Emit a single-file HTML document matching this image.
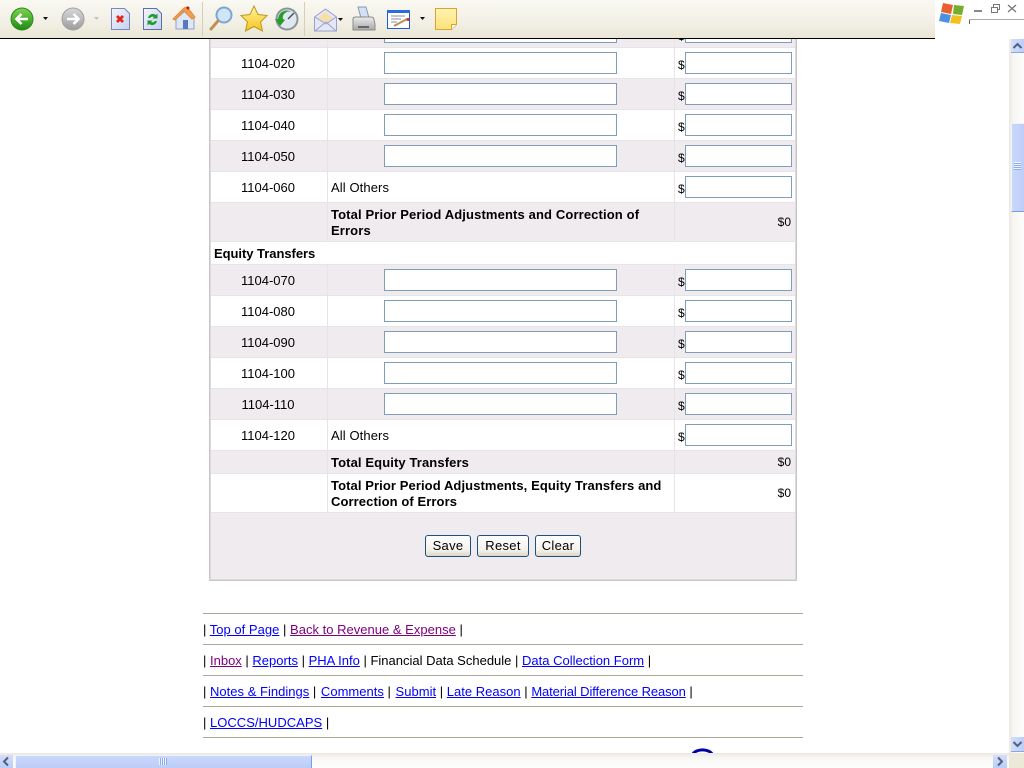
<!DOCTYPE html>
<html><head><meta charset="utf-8"><title>Financial Data Schedule</title>
<style>
html,body{margin:0;padding:0;width:1024px;height:768px;overflow:hidden;background:#fff}
body{font:13px/16px "Liberation Sans",Arial,sans-serif;color:#000;position:relative}
div,input,button,svg{position:absolute;box-sizing:border-box}
.panel{left:209px;top:39px;width:588px;height:542px;background:#efebef;border:1px solid #c6c6c6;border-top:0;box-shadow:inset 1px 0 #dcdadc,inset -1px 0 #dcdadc,inset 0 -1px #dcdadc}
.r{left:211px;width:584px;background:#fff}
.g{background:#efebef}
.l{height:1px;left:211px;width:584px;background:#e6e4e6}
.v{width:1px;background:#e6e4e6}
.c{left:211px;width:114px;text-align:center;white-space:nowrap;margin-top:1px}
.t{left:331px;white-space:nowrap;margin-top:1px;letter-spacing:.1px}
.b{font-weight:bold;letter-spacing:.11px}
.i{left:384px;width:233px;height:22px;background:#fff;border:1px solid #7f9db9}
.m{left:685px;width:107px;height:22px;background:#fff;border:1px solid #7f9db9}
.d{left:678px;font-size:12px;white-space:nowrap}
.z{right:233px;white-space:nowrap;font-size:12px}
.btn{top:535px;height:22px;background:linear-gradient(#fff,#f4f2ea 70%,#dcd8c8);border:1px solid #1c5180;border-radius:3px;text-align:center;font-size:13px;line-height:19px;letter-spacing:.3px}
.h{left:203px;width:600px;height:1px;background:#aca899}
.f{left:203px;white-space:nowrap;letter-spacing:.015px;margin-top:1px}
a{color:#0000ff;text-decoration:underline}
a.p{color:#800080}
.tb{left:0;top:0;width:935px;height:39px;background:linear-gradient(#f9f8f2,#f2f0e5 60%,#e9e6d6);border-bottom:1px solid #000}
.sep{top:2px;width:1px;height:34px;background:#d5cfb8}
</style></head><body>

<div class="panel"></div>
<div class="r g" style="top:39px;height:8px"></div>
<div class="r" style="top:48px;height:30px"></div>
<div class="r g" style="top:79px;height:30px"></div>
<div class="r" style="top:110px;height:30px"></div>
<div class="r g" style="top:141px;height:30px"></div>
<div class="r" style="top:172px;height:30px"></div>
<div class="r g" style="top:203px;height:38px"></div>
<div class="r" style="top:242px;height:22px"></div>
<div class="r g" style="top:265px;height:30px"></div>
<div class="r" style="top:296px;height:30px"></div>
<div class="r g" style="top:327px;height:30px"></div>
<div class="r" style="top:358px;height:30px"></div>
<div class="r g" style="top:389px;height:30px"></div>
<div class="r" style="top:420px;height:30px"></div>
<div class="r g" style="top:451px;height:22px"></div>
<div class="r" style="top:474px;height:38px"></div>

<div class="v" style="left:327px;top:39px;height:203px"></div>
<div class="v" style="left:674px;top:39px;height:203px"></div>
<div class="v" style="left:327px;top:265px;height:248px"></div>
<div class="v" style="left:674px;top:265px;height:248px"></div>
<div class="l" style="top:47px"></div><div class="l" style="top:78px"></div><div class="l" style="top:109px"></div><div class="l" style="top:140px"></div><div class="l" style="top:171px"></div><div class="l" style="top:202px"></div><div class="l" style="top:241px"></div><div class="l" style="top:264px"></div><div class="l" style="top:295px"></div><div class="l" style="top:326px"></div><div class="l" style="top:357px"></div><div class="l" style="top:388px"></div><div class="l" style="top:419px"></div><div class="l" style="top:450px"></div><div class="l" style="top:473px"></div><div class="l" style="top:512px;height:1px"></div>

<div class="i" style="top:21px"></div><div class="m" style="top:21px"></div>
<div class="d" style="top:28px">$</div>

<div class="c" style="top:55px">1104-020</div><div class="i" style="top:52px"></div><div class="d" style="top:57px">$</div><div class="m" style="top:52px"></div>
<div class="c" style="top:86px">1104-030</div><div class="i" style="top:83px"></div><div class="d" style="top:88px">$</div><div class="m" style="top:83px"></div>
<div class="c" style="top:117px">1104-040</div><div class="i" style="top:114px"></div><div class="d" style="top:119px">$</div><div class="m" style="top:114px"></div>
<div class="c" style="top:148px">1104-050</div><div class="i" style="top:145px"></div><div class="d" style="top:150px">$</div><div class="m" style="top:145px"></div>
<div class="c" style="top:179px">1104-060</div><div class="t" style="top:179px">All Others</div><div class="d" style="top:181px">$</div><div class="m" style="top:176px"></div>
<div class="t b" style="top:206px;letter-spacing:.13px">Total Prior Period Adjustments and Correction of<br>Errors</div><div class="z" style="top:214px">$0</div>
<div class="b" style="left:214px;top:246px;white-space:nowrap;letter-spacing:-.04px">Equity Transfers</div>
<div class="c" style="top:272px">1104-070</div><div class="i" style="top:269px"></div><div class="d" style="top:274px">$</div><div class="m" style="top:269px"></div>
<div class="c" style="top:303px">1104-080</div><div class="i" style="top:300px"></div><div class="d" style="top:305px">$</div><div class="m" style="top:300px"></div>
<div class="c" style="top:334px">1104-090</div><div class="i" style="top:331px"></div><div class="d" style="top:336px">$</div><div class="m" style="top:331px"></div>
<div class="c" style="top:365px">1104-100</div><div class="i" style="top:362px"></div><div class="d" style="top:367px">$</div><div class="m" style="top:362px"></div>
<div class="c" style="top:396px">1104-110</div><div class="i" style="top:393px"></div><div class="d" style="top:398px">$</div><div class="m" style="top:393px"></div>
<div class="c" style="top:427px">1104-120</div><div class="t" style="top:427px">All Others</div><div class="d" style="top:429px">$</div><div class="m" style="top:424px"></div>
<div class="t b" style="top:454px">Total Equity Transfers</div><div class="z" style="top:454px">$0</div>
<div class="t b" style="top:477px;letter-spacing:.09px">Total Prior Period Adjustments, Equity Transfers and<br>Correction of Errors</div><div class="z" style="top:485px">$0</div>

<div class="btn" style="left:425px;width:46px">Save</div>
<div class="btn" style="left:477px;width:52px">Reset</div>
<div class="btn" style="left:535px;width:46px">Clear</div>

<div class="h" style="top:613px"></div>
<div class="f" style="top:621px">| <a href="#">Top of Page</a> | <a class="p" href="#">Back to Revenue &amp; Expense</a> |</div>
<div class="h" style="top:644px"></div>
<div class="f" style="top:652px;letter-spacing:0">| <a class="p" href="#">Inbox</a> | <a href="#">Reports</a> | <a href="#">PHA Info</a> | Financial Data Schedule | <a href="#">Data Collection Form</a> |</div>
<div class="h" style="top:675px"></div>
<div class="f" style="top:683px">| <a href="#">Notes &amp; Findings</a> | <a href="#" style="margin-left:1px">Comments</a> | <a href="#" style="margin-left:1px">Submit</a> | <a href="#">Late Reason</a> | <a href="#" style="letter-spacing:-.11px">Material Difference Reason</a> |</div>
<div class="h" style="top:706px"></div>
<div class="f" style="top:714px">| <a href="#">LOCCS/HUDCAPS</a> |</div>
<div class="h" style="top:737px"></div>
<svg style="left:690px;top:746px" width="26" height="8"><path d="M3 8a10 6 0 0 1 19 0" fill="none" stroke="#0000a8" stroke-width="3"/></svg>

<!-- toolbar -->
<div class="tb"></div>
<div class="sep" style="left:202px"></div><div class="sep" style="left:304px"></div>
<svg style="left:0;top:0" width="470" height="38">
<defs>
<linearGradient id="gr" x1="0" y1="0" x2="0" y2="1"><stop offset="0" stop-color="#7fd34e"/><stop offset="1" stop-color="#1f8a16"/></linearGradient>
<linearGradient id="gy" x1="0" y1="0" x2="0" y2="1"><stop offset="0" stop-color="#d8d8d8"/><stop offset="1" stop-color="#9c9c9c"/></linearGradient>
<linearGradient id="st" x1="0" y1="0" x2="0" y2="1"><stop offset="0" stop-color="#fff6a0"/><stop offset="1" stop-color="#f6c21c"/></linearGradient>
<linearGradient id="pg" x1="0" y1="0" x2="1" y2="1"><stop offset="0" stop-color="#f4f6fd"/><stop offset="1" stop-color="#c4d0f0"/></linearGradient>
<linearGradient id="nt" x1="0" y1="0" x2="0" y2="1"><stop offset="0" stop-color="#fff3b0"/><stop offset="1" stop-color="#fde27a"/></linearGradient>
<linearGradient id="pr" x1="0" y1="0" x2="0" y2="1"><stop offset="0" stop-color="#ececec"/><stop offset="1" stop-color="#a8a8a8"/></linearGradient>
</defs>
<!-- back -->
<circle cx="22" cy="19" r="11" fill="url(#gr)" stroke="#2a8a1c"/>
<path d="M28 19H17M21.500 14L16.500 19l5 5" fill="none" stroke="#fff" stroke-width="2.600"/>
<path d="M43 17h5l-2.500 3z" fill="#111"/>
<!-- forward -->
<circle cx="73" cy="19" r="11" fill="url(#gy)" stroke="#a0a0a0"/>
<path d="M67 19h11M73.500 14l5 5-5 5" fill="none" stroke="#fff" stroke-width="2.600"/>
<path d="M94 17h5l-2.500 3z" fill="#c4c4bc"/>
<!-- stop -->
<path d="M111.500 8.500h13l5 5v16h-18z" fill="url(#pg)" stroke="#7c86b8"/>
<path d="M117 16l6 6M123 16l-6 6" stroke="#e0281c" stroke-width="2.800"/>
<!-- refresh -->
<path d="M143.500 8.500h13l5 5v16h-18z" fill="url(#pg)" stroke="#5f6ea8"/>
<path d="M148 18a5 5 0 0 1 8-3l1.500-1.500v5h-5l1.500-1.500a3 3 0 0 0-4 1zM157 21a5 5 0 0 1-8 3l-1.500 1.500v-5h5L151 22a3 3 0 0 0 4-1z" fill="#1c9c2c"/>
<!-- home -->
<path d="M176 19v10h18V18l-8-8z" fill="#dfe6f5" stroke="#93a0c8"/>
<path d="M173 19l11-11 3-1 8 10-3 2-8-8-9 9z" fill="#f0a050" stroke="#e08a38"/>
<rect x="183" y="20" width="5" height="9" fill="#5878c0"/>
<circle cx="188" cy="8" r="1.500" fill="#b02020"/>
<!-- search -->
<circle cx="224" cy="15" r="7.500" fill="#cfe6fa" stroke="#7fa6d2" stroke-width="2"/>
<path d="M218 21l-7 8" stroke="#c09050" stroke-width="3" stroke-linecap="round"/>
<!-- star -->
<path d="M254 6l4 8.500 9 1-6.500 6.500 2 9-8.500-4.500-8.500 4.500 2-9-6.500-6.500 9-1z" fill="url(#st)" stroke="#b89a20"/>
<!-- history -->
<circle cx="287" cy="19" r="10.500" fill="#dfe8ee" stroke="#8a949c" stroke-width="2"/>
<path d="M288 19l6-6" stroke="#445" stroke-width="1.300"/>
<path d="M275 19l5 7 5-6-2-1a6 6 0 0 1 8-7c-3-3-12-2-13 7z" fill="#2a9c28"/>
<!-- mail -->
<path d="M314.500 17l11-8 11 8v14h-22z" fill="#e4e8f6" stroke="#9aa0cc"/>
<path d="M318 18l7-6 8 6-7 5z" fill="#f6dfa8"/>
<path d="M315 31l11-9 10 9M315 17l11 7 10-7" fill="none" stroke="#9aa0cc"/>
<path d="M338 18h5l-2.500 3z" fill="#111"/>
<!-- print -->
<path d="M358 7h8l3 11h-8z" fill="#d4e0f6" stroke="#8a9ab0"/>
<path d="M353 19q0-2 3-2h15q3 0 3 3l1 4v6h-22v-6z" fill="url(#pr)" stroke="#8a8a8a"/>
<rect x="358" y="26" width="11" height="2" fill="#666"/>
<!-- edit -->
<rect x="387.500" y="10.500" width="22" height="18" fill="#fff" stroke="#1c5cc8"/>
<rect x="387" y="10" width="23" height="3" fill="#2a6cdc"/>
<path d="M391 16h14M391 19h10M391 22h6" stroke="#88a" stroke-width="1"/>
<path d="M394 26l13-7" stroke="#b8905c" stroke-width="2"/>
<circle cx="408" cy="19.500" r="1.500" fill="#d02828"/>
<path d="M420 17h5l-2.500 3z" fill="#111"/>
<!-- note -->
<path d="M435.500 8.500h21v16l-5 5h-16z" fill="url(#nt)" stroke="#d8a430"/>
<path d="M451.500 29.500v-5h5" fill="#fff" stroke="#d8a430"/>
</svg>

<!-- window corner -->
<svg style="left:935px;top:0" width="89" height="30">
<path d="M8 3l10 2-2 9-10-2z" fill="#e8602c"/>
<path d="M19 5l10 1-2 9-9-1z" fill="#74ae2c"/>
<path d="M6 13l10 2-2 8-10-2z" fill="#4c90e4"/>
<path d="M17 15l10 1-2 8-10-1z" fill="#f4c020"/>
<path d="M39 11h8" stroke="#888" stroke-width="2"/>
<rect x="56.500" y="7.500" width="6" height="5" fill="none" stroke="#777"/><path d="M58.500 7V4.500h6v5h-2" fill="none" stroke="#777"/>
<path d="M73 5l8 7M81 5l-8 7" stroke="#777" stroke-width="1.300"/>
<path d="M34.500 24v-4.500H89" fill="none" stroke="#aaa"/><path d="M34.500 20v4" stroke="#666"/>
</svg>

<!-- vertical scrollbar -->
<div style="left:1009px;top:39px;width:15px;height:714px;background:linear-gradient(90deg,#ece9e2,#f7f6f2 30%,#fdfdfc)"></div>
<div style="left:1011px;top:39px;width:13px;height:14px;background:linear-gradient(90deg,#d4defa,#bccdf8);border-bottom:1px solid #8aa4ec"></div>
<svg style="left:1011px;top:39px" width="13" height="14"><path d="M2.500 9l4-4 4 4" fill="none" stroke="#4d6185" stroke-width="2"/></svg>
<div style="left:1011px;top:123px;width:13px;height:89px;background:linear-gradient(90deg,#c9d8fb,#bccdf8);border:1px solid #eef2fd;border-bottom:1px solid #7d9bea;border-right:0"></div>
<svg style="left:1014px;top:162px" width="7" height="9"><path d="M0 .500h7M0 2.500h7M0 4.500h7M0 6.500h7" stroke="#eef4ff"/><path d="M0 1.500h7M0 3.500h7M0 5.500h7M0 7.500h7" stroke="#8cabf0"/></svg>
<div style="left:1011px;top:737px;width:13px;height:15px;background:linear-gradient(90deg,#d4defa,#bccdf8);border-bottom:1px solid #8aa4ec"></div>
<svg style="left:1011px;top:737px" width="13" height="15"><path d="M2.500 5l4 4 4-4" fill="none" stroke="#4d6185" stroke-width="2"/></svg>

<!-- horizontal scrollbar -->
<div style="left:0;top:753px;width:1009px;height:15px;background:linear-gradient(#ece9e2,#f7f6f2 30%,#fdfdfc)"></div>
<div style="left:1009px;top:753px;width:15px;height:15px;background:#ece9d8"></div>
<div style="left:0;top:755px;width:13px;height:13px;background:linear-gradient(#d4defa,#bccdf8)"></div>
<svg style="left:0;top:755px" width="13" height="13"><path d="M8 2.500l-4 4 4 4" fill="none" stroke="#4d6185" stroke-width="2"/></svg>
<div style="left:15px;top:755px;width:297px;height:13px;background:linear-gradient(#c9d8fb,#bccdf8);border:1px solid #eef2fd;border-bottom:0;border-right:1px solid #7d9bea"></div>
<svg style="left:159px;top:758px" width="9" height="7"><path d="M.5 0v7M2.500 0v7M4.500 0v7M6.500 0v7" stroke="#eef4ff"/><path d="M1.500 0v7M3.500 0v7M5.500 0v7M7.500 0v7" stroke="#8cabf0"/></svg>
<div style="left:993px;top:755px;width:14px;height:13px;background:linear-gradient(#d4defa,#bccdf8)"></div>
<svg style="left:993px;top:755px" width="14" height="13"><path d="M5 2.500l4 4-4 4" fill="none" stroke="#4d6185" stroke-width="2"/></svg>
</body></html>
